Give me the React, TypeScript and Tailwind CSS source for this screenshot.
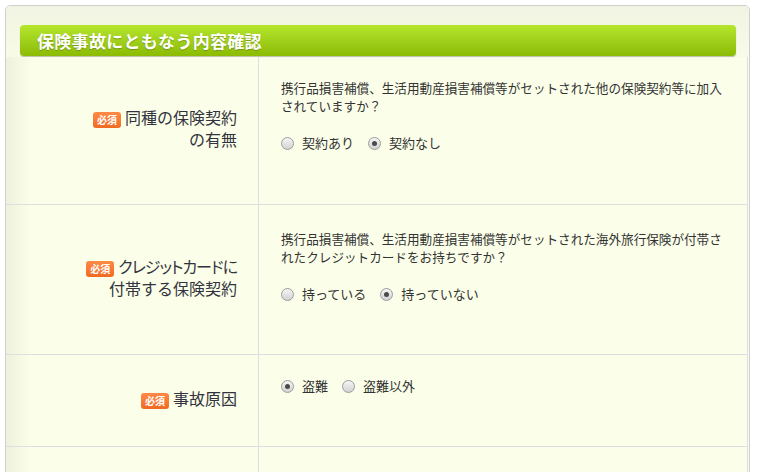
import React from "react";

const font = { fontFamily: '"Noto Sans CJK JP", "Noto Sans", sans-serif' };

type Opt = { label: string; checked?: boolean };

const Radio = ({ label, checked }: Opt) => (
  <label className="flex items-center gap-[8px]">
    <span className="relative w-[13px] h-[13px] rounded-full border border-[#9c9c9c] bg-linear-to-b from-[#f6f6f6] to-[#d2d2d2] flex items-center justify-center">
      {checked && <span className="w-[5px] h-[5px] rounded-full bg-[#4a4a4a]" />}
    </span>
    <span className="text-[13px] text-[#333]">{label}</span>
  </label>
);

const Badge = () => (
  <span className="inline-flex items-center justify-center w-[28px] h-[16px] rounded-[3px] bg-linear-to-b from-[#ff8a45] to-[#f06a22] text-white text-[10px] font-bold leading-none mr-[4px] align-middle">
    必須
  </span>
);

const Row = ({
  height,
  pt,
  label,
  question,
  options,
}: {
  height: string;
  pt: string;
  label: React.ReactNode;
  question?: string[];
  options: Opt[];
}) => (
  <div className={`flex border-b border-[#dcdfe2] ${height}`}>
    <div className="w-[253px] shrink-0 border-r border-[#dcdfe2] bg-linear-to-r from-[#eef1dc] to-[#fbffe9] to-[10%] flex items-center justify-end pr-[21px] pb-[5px]">
      <div className="text-right text-[16px] leading-[22px] text-[#333340]">{label}</div>
    </div>
    <div className={`flex-1 pl-[22px] ${pt}`}>
      {question && (
        <div className="text-[12.6px] leading-[18px] text-[#333] mb-[19px]">
          {question.map((q, i) => (
            <div key={i} className="whitespace-nowrap">
              {q}
            </div>
          ))}
        </div>
      )}
      <div className="flex items-center gap-[14px] h-[18px]">
        {options.map((o) => (
          <Radio key={o.label} {...o} />
        ))}
      </div>
    </div>
  </div>
);

export default function App() {
  return (
    <div className="w-[757px] h-[472px] overflow-hidden bg-white pt-[5px] pl-[5px]" style={font}>
      <div className="w-[745px] h-[480px] border border-[#cfcfcf] rounded-[5px] bg-[#fbffe9] overflow-hidden">
        <div className="bg-linear-to-b from-[#f2f4e3] to-[#f8fbe7] pt-[19px] pl-[14px] pr-[13px] pb-[1px]">
          <div className="h-[31px] rounded-[4px] bg-linear-to-b from-[#b6e62c] to-[#8cbb02] shadow-[0_1px_1px_rgba(0,0,0,0.25)] flex items-center pl-[17px]">
            <h2 className="text-white text-[17px] font-bold tracking-[0.3px] [text-shadow:0_1px_1px_rgba(0,0,0,0.25)]">
              保険事故にともなう内容確認
            </h2>
          </div>
        </div>
        <div className="border-r border-[#dcdfe2] mr-[1px]">
          <Row
            height="h-[148px]"
            pt="pt-[22px]"
            label={
              <>
                <Badge />
                同種の保険契約
                <br />
                の有無
              </>
            }
            question={[
              "携行品損害補償、生活用動産損害補償等がセットされた他の保険契約等に加入",
              "されていますか？",
            ]}
            options={[{ label: "契約あり" }, { label: "契約なし", checked: true }]}
          />
          <Row
            height="h-[150px]"
            pt="pt-[25px]"
            label={
              <>
                <Badge />
                <span className="[font-feature-settings:'palt'] tracking-[-1px]">クレジットカードに</span>
                <br />
                付帯する保険契約
              </>
            }
            question={[
              "携行品損害補償、生活用動産損害補償等がセットされた海外旅行保険が付帯さ",
              "れたクレジットカードをお持ちですか？",
            ]}
            options={[{ label: "持っている" }, { label: "持っていない", checked: true }]}
          />
          <Row
            height="h-[92px]"
            pt="pt-[22px]"
            label={
              <>
                <Badge />
                事故原因
              </>
            }
            options={[{ label: "盗難", checked: true }, { label: "盗難以外" }]}
          />
          <div className="flex h-[40px]">
            <div className="w-[253px] shrink-0 border-r border-[#dcdfe2] bg-linear-to-r from-[#eef1dc] to-[#fbffe9] to-[10%]" />
            <div className="flex-1" />
          </div>
        </div>
      </div>
    </div>
  );
}
